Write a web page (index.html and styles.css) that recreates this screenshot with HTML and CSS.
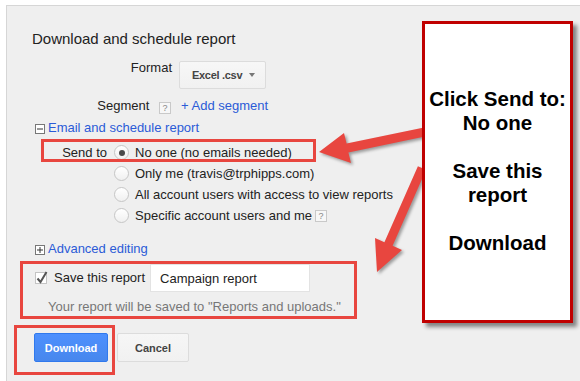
FILE: index.html
```html
<!DOCTYPE html>
<html lang="en">
<head>
  <meta charset="UTF-8">
  <title>Download and schedule report</title>
  <link rel="stylesheet" href="styles.css">
</head>
<body>

  <div class="page">
    <div class="panel">
      <h1 class="title">Download and schedule report</h1>

      <div class="field field-format">
        <span class="field-label">Format</span>
        <button class="select">Excel .csv <span class="caret"></span></button>
      </div>

      <div class="field field-segment">
        <span class="field-label">Segment <span class="help">?</span></span>
        <a class="link" href="#">+ Add segment</a>
      </div>

      <div class="toggle">
        <svg class="toggle-box" width="10" height="10" viewBox="0 0 10 10">
          <rect x="0.5" y="0.5" width="9" height="9" fill="#fff" stroke="#777"/>
          <path d="M2 5h6" stroke="#333" stroke-width="1"/>
        </svg>
        <a class="link" href="#">Email and schedule report</a>
      </div>

      <div class="sendto">
        <span class="sendto-label">Send to</span>
        <ul class="options">
          <li><span class="radio checked"></span>No one (no emails needed)</li>
          <li><span class="radio"></span>Only me (travis@trphipps.com)</li>
          <li><span class="radio"></span>All account users with access to view reports</li>
          <li><span class="radio"></span>Specific account users and me <span class="help">?</span></li>
        </ul>
      </div>

      <div class="toggle toggle-advanced">
        <svg class="toggle-box" width="10" height="10" viewBox="0 0 10 10">
          <rect x="0.5" y="0.5" width="9" height="9" fill="#fff" stroke="#777"/>
          <path d="M2 5h6M5 2v6" stroke="#333" stroke-width="1"/>
        </svg>
        <a class="link" href="#">Advanced editing</a>
      </div>

      <div class="save-row">
        <svg class="checkbox" width="13" height="14" viewBox="0 0 13 14">
          <rect x="0.5" y="1.5" width="11" height="11" fill="#fff" stroke="#c4c4c4"/>
          <path d="M2.5 7.5l3 3.5L11.5 1" fill="none" stroke="#555" stroke-width="2"/>
        </svg>
        <span class="save-label">Save this report</span>
        <input class="text-input" type="text" value="Campaign report">
      </div>
      <p class="save-note">Your report will be saved to "Reports and uploads."</p>

      <div class="actions">
        <button class="btn btn-primary">Download</button>
        <button class="btn">Cancel</button>
      </div>
    </div>

    <!-- annotations drawn over the screenshot -->
    <svg class="marks" width="580" height="381" viewBox="0 0 580 381">
      <g fill="none" stroke="#e8463f" stroke-width="3">
        <rect x="42.5" y="140.5" width="272" height="20"/>
        <rect x="21.5" y="262.5" width="334" height="55"/>
        <rect x="15.5" y="326.5" width="98" height="47"/>
      </g>
      <g class="arrows" fill="#e8463f">
        <polygon points="319,152 344,133 346.6,143.6 424,127.4 425,136.4 348.4,152.4 351,163"/>
        <polygon points="377,272 375,238 384.4,242.2 417.9,166.2 426.1,169.8 392.6,245.8 402,250"/>
      </g>
    </svg>

    <div class="callout">
      <p>Click Send to:<br>No one<br><br>Save this<br>report<br><br>Download</p>
    </div>
  </div>

</body>
</html>
```

FILE: styles.css
```css
body {
  margin: 0;
  background-color: #fff;
  font-family: "Liberation Sans", Arial, sans-serif;
  color: #222;
}

.page {
  position: relative;
  width: 580px;
  height: 381px;
  overflow: hidden;
}

.panel {
  box-sizing: border-box;
  height: 376px;
  margin: 5px 0 0 6px;
  padding: 24px 0 0 27px;
  background-color: #efefef;
  border-top: 1px solid #d6d6d6;
  border-left: 1px solid #d6d6d6;
  font-size: 13px;
  line-height: 16px;
}

.title {
  margin: 0 0 12px -2px;
  font-size: 15px;
  font-weight: normal;
  line-height: 18px;
  color: #222;
}

.link {
  color: #2b5bd7;
  text-decoration: none;
}

/* label / control rows */
.field {
  display: flex;
  align-items: flex-start;
}

.field-label {
  width: 138px;
  text-align: right;
  flex-shrink: 0;
}

.field-format {
  height: 29px;
}

.field-format .select {
  margin: 1px 0 0 7px;
}

.field-segment {
  margin-top: 9px;
}

.field-segment .link {
  margin-left: 9px;
}

.field-segment .help {
  margin: 0 1px 0 6px;
}

.select {
  box-sizing: border-box;
  width: 87px;
  height: 28px;
  padding: 0 0 0 12px;
  display: flex;
  align-items: center;
  background: linear-gradient(#f7f7f7, #f1f1f1);
  border: 1px solid #dcdcdc;
  border-radius: 2px;
  font-family: "Liberation Sans", Arial, sans-serif;
  font-size: 11px;
  font-weight: bold;
  letter-spacing: -0.3px;
  color: #444;
}

.caret {
  width: 0;
  height: 0;
  margin-left: 7px;
  border-left: 3px solid transparent;
  border-right: 3px solid transparent;
  border-top: 4px solid #777;
}

.help {
  display: inline-block;
  box-sizing: border-box;
  width: 12px;
  height: 12px;
  vertical-align: -1px;
  background-color: #f7f7f7;
  border: 1px solid #c9c9c9;
  font-size: 9px;
  line-height: 10px;
  text-align: center;
  color: #888;
}

/* collapsible sections */
.toggle {
  display: flex;
  align-items: center;
  margin-top: 6px;
  padding-left: 1px;
}

.toggle-box {
  display: block;
  margin: 1px 3px 0 0;
}

.toggle-advanced {
  margin-top: 15px;
}

.sendto {
  display: flex;
  margin-top: 6px;
  line-height: 21px;
}

.sendto-label {
  width: 73px;
  text-align: right;
  flex-shrink: 0;
}

.options {
  margin: 0 0 0 7px;
  padding: 0;
  list-style: none;
}

.options li {
  display: flex;
  align-items: center;
  height: 21px;
}

.options .help {
  margin-left: 3px;
  vertical-align: middle;
}

.radio {
  box-sizing: border-box;
  width: 15px;
  height: 15px;
  margin-right: 6px;
  display: flex;
  align-items: center;
  justify-content: center;
  border: 1px solid #c6c6c6;
  border-radius: 50%;
  background: linear-gradient(#fff, #f0f0f0);
}

.radio.checked::after {
  content: "";
  width: 6px;
  height: 6px;
  border-radius: 50%;
  background-color: #4a4a4a;
}

/* save report */
.save-row {
  display: flex;
  align-items: center;
  margin-top: 7px;
  height: 28px;
}

.checkbox {
  display: block;
  margin: 0 6px 0 1px;
}

.save-label {
  margin-right: 5px;
}

.text-input {
  box-sizing: border-box;
  width: 160px;
  height: 28px;
  padding: 0 0 0 9px;
  border: 1px solid #e3e3e3;
  background-color: #fff;
  font-family: "Liberation Sans", Arial, sans-serif;
  font-size: 13px;
  color: #222;
}

.save-note {
  margin: 7px 0 0 14px;
  color: #777;
}

.actions {
  display: flex;
  gap: 9px;
  margin-top: 18px;
}

.btn {
  box-sizing: border-box;
  width: 72px;
  height: 29px;
  padding: 0;
  background: linear-gradient(#f6f6f6, #f1f1f1);
  border: 1px solid #dcdcdc;
  border-radius: 2px;
  font-family: "Liberation Sans", Arial, sans-serif;
  font-size: 11px;
  font-weight: bold;
  color: #444;
}

.btn-primary {
  width: 74px;
  background: linear-gradient(#4d90fe, #4787ed);
  border-color: #3079ed;
  color: #fff;
}

/* annotation layer */
.marks {
  position: absolute;
  top: 0;
  left: 0;
  pointer-events: none;
}

.arrows {
  filter: drop-shadow(2px 2px 1.5px rgba(0, 0, 0, 0.35));
}

.callout {
  position: absolute;
  left: 422px;
  top: 21px;
  box-sizing: border-box;
  width: 151px;
  height: 302px;
  display: flex;
  align-items: center;
  justify-content: center;
  background-color: #fff;
  border: 3px solid #c00000;
  box-shadow: 4px 4px 4px rgba(0, 0, 0, 0.45);
}

.callout p {
  margin: 0 0 2px;
  font-size: 20.5px;
  font-weight: bold;
  line-height: 24px;
  text-align: center;
  color: #000;
}
```
